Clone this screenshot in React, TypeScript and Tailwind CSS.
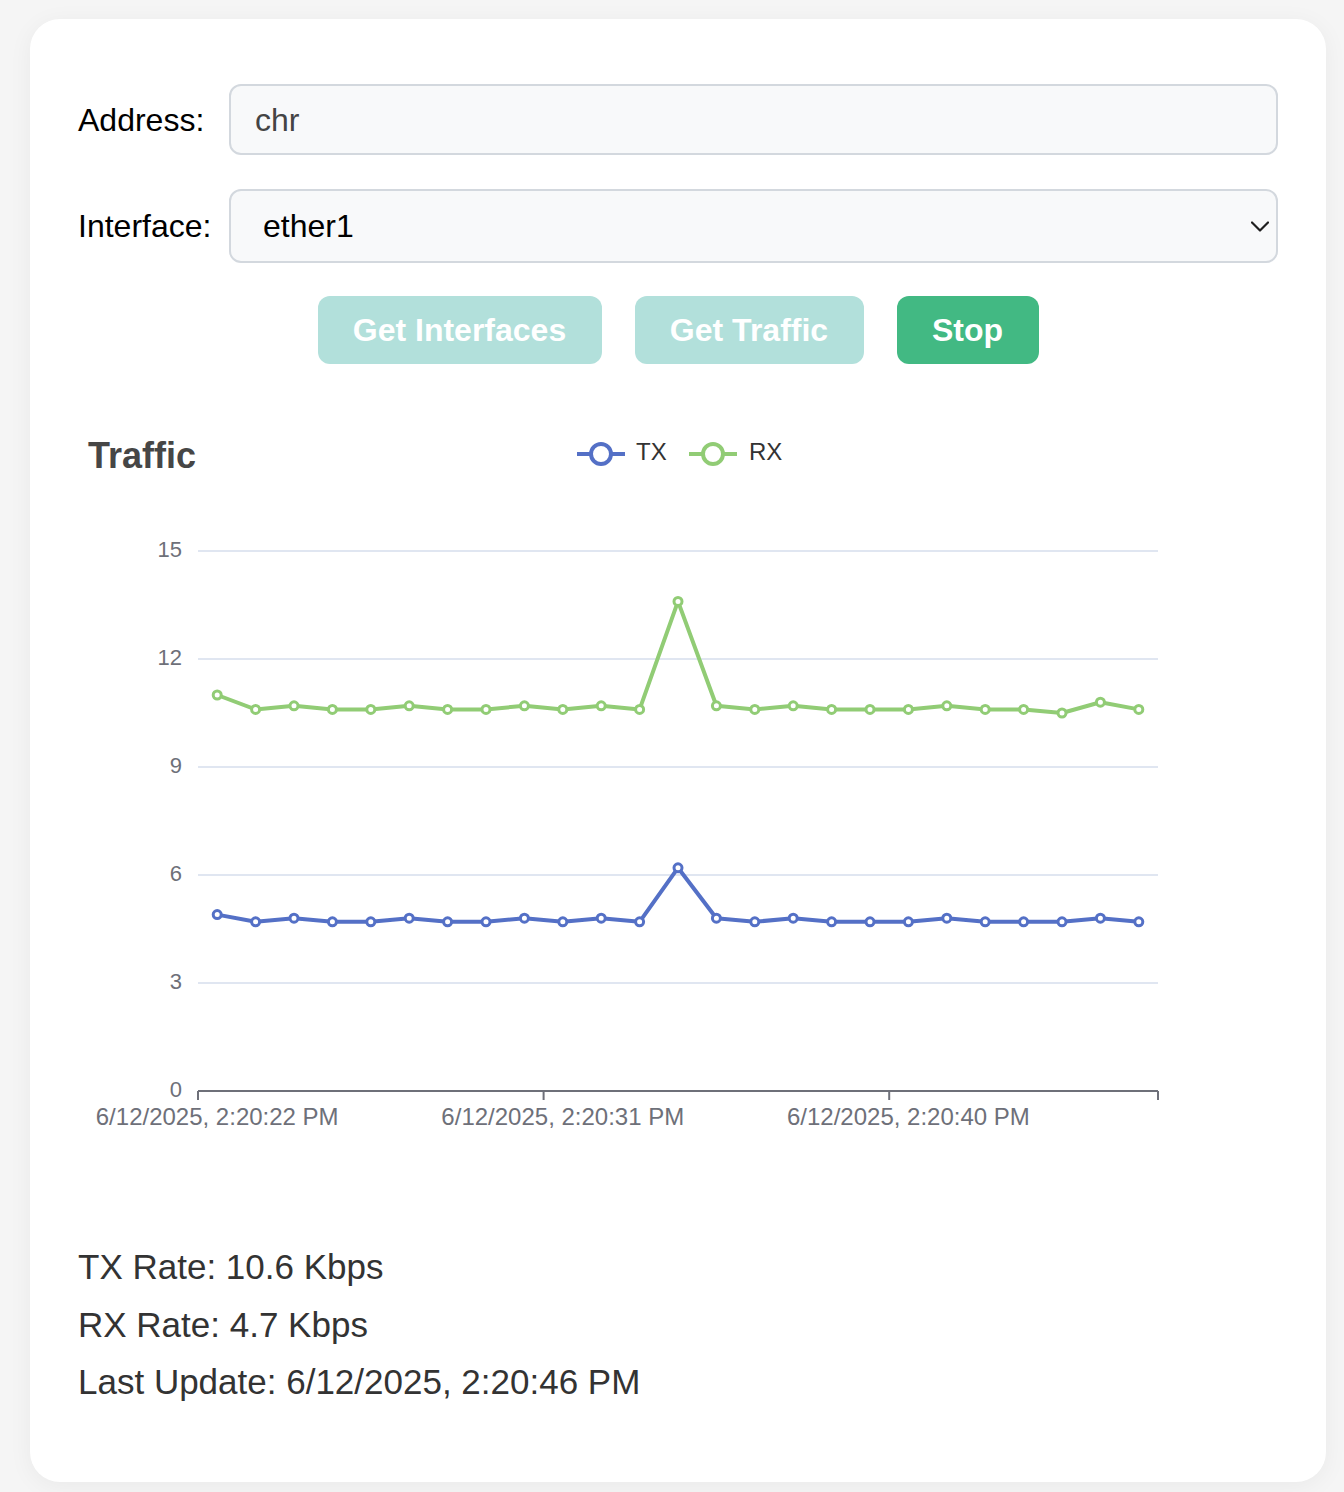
const tx = [4.9, 4.7, 4.8, 4.7, 4.7, 4.8, 4.7, 4.7, 4.8, 4.7, 4.8, 4.7, 6.2, 4.8, 4.7, 4.8, 4.7, 4.7, 4.7, 4.8, 4.7, 4.7, 4.7, 4.8, 4.7];
const rx = [11.0, 10.6, 10.7, 10.6, 10.6, 10.7, 10.6, 10.6, 10.7, 10.6, 10.7, 10.6, 13.6, 10.7, 10.6, 10.7, 10.6, 10.6, 10.6, 10.7, 10.6, 10.6, 10.5, 10.8, 10.6];

const px = (i: number) => 139.2 + 38.4 * i;
const py = (v: number) => 692 - 36 * v;

const Series = ({ data, color }: { data: number[]; color: string }) => {
  const pts = data.map((v, i) => `${px(i)},${py(v)}`).join(" ");
  return (
    <g>
      <polyline points={pts} fill="none" stroke={color} strokeWidth={4} strokeLinejoin="round" />
      {data.map((v, i) => (
        <circle key={i} cx={px(i)} cy={py(v)} r={4} fill="#fff" stroke={color} strokeWidth={3} />
      ))}
    </g>
  );
};

const Chart = () => {
  const grid = [3, 6, 9, 12, 15];
  return (
    <svg width={1199} height={839} className="block" style={{ fontFamily: "'Liberation Sans', Arial, sans-serif" }}>
      <text x={10} y={59} dominantBaseline="middle" fontSize={36} fontWeight={700} fill="#464646">
        Traffic
      </text>

      {/* legend */}
      <line x1={499} y1={55} x2={547} y2={55} stroke="#5470c6" strokeWidth={4} />
      <circle cx={523} cy={55} r={10} fill="#fff" stroke="#5470c6" strokeWidth={4} />
      <text x={558} y={55} dominantBaseline="middle" fontSize={24} fill="#333">TX</text>
      <line x1={611} y1={55} x2={659} y2={55} stroke="#91cc75" strokeWidth={4} />
      <circle cx={635} cy={55} r={10} fill="#fff" stroke="#91cc75" strokeWidth={4} />
      <text x={671} y={55} dominantBaseline="middle" fontSize={24} fill="#333">RX</text>

      {grid.map((v) => (
        <line key={v} x1={120} x2={1080} y1={py(v)} y2={py(v)} stroke="#e0e6f1" strokeWidth={2} />
      ))}
      {[0, ...grid].map((v) => (
        <text key={v} x={104} y={py(v)} textAnchor="end" dominantBaseline="middle" fontSize={22} fill="#6e7079">
          {v}
        </text>
      ))}

      <line x1={120} x2={1080} y1={692} y2={692} stroke="#6e7079" strokeWidth={2} />
      {[120, 465.6, 811.2, 1080].map((x) => (
        <line key={x} x1={x} x2={x} y1={692} y2={701} stroke="#6e7079" strokeWidth={2} />
      ))}
      {[
        [0, "6/12/2025, 2:20:22 PM"],
        [9, "6/12/2025, 2:20:31 PM"],
        [18, "6/12/2025, 2:20:40 PM"],
      ].map(([i, label]) => (
        <text key={i} x={px(i as number)} y={720} textAnchor="middle" dominantBaseline="middle" fontSize={24} fill="#6e7079">
          {label}
        </text>
      ))}

      <Series data={rx} color="#91cc75" />
      <Series data={tx} color="#5470c6" />
    </svg>
  );
};

export default function App() {
  return (
    <div className="min-h-[1492px] bg-[#f5f5f5] pt-[19px] pb-[10px] font-['Liberation_Sans',Arial,sans-serif]">
      <div className="ml-[30px] w-[1296px] rounded-[30px] bg-white px-[48px] pt-[65px] pb-[71px] shadow-[0_4px_24px_rgba(0,0,0,0.05)]">
        <div className="flex items-center">
          <label className="w-[151px] shrink-0 text-[32px] text-black">Address:</label>
          <div className="flex h-[71px] flex-1 items-center rounded-[12px] border-2 border-[#d3d8de] bg-[#f8f9fa] px-[24px] text-[32px] text-[#444]">
            chr
          </div>
        </div>

        <div className="mt-[34px] flex items-center">
          <label className="w-[151px] shrink-0 text-[32px] text-black">Interface:</label>
          <div className="flex h-[74px] flex-1 items-center justify-between rounded-[12px] border-2 border-[#d3d8de] bg-[#f8f9fa] pl-[32px] pr-[7px] text-[32px] text-black">
            <span>ether1</span>
            <svg width={18} height={11} viewBox="0 0 18 11" className="text-[#1f1f1f]">
              <path d="M1 1.5 L9 9.5 L17 1.5" fill="none" stroke="currentColor" strokeWidth={2.2} strokeLinecap="round" strokeLinejoin="round" />
            </svg>
          </div>
        </div>

        <div className="mt-[33px] flex justify-center gap-[33px]">
          <button className="h-[68px] w-[284px] rounded-[12px] bg-[#b2e0db] text-[32px] font-bold text-white">
            Get Interfaces
          </button>
          <button className="h-[68px] w-[229px] rounded-[12px] bg-[#b2e0db] text-[32px] font-bold text-white">
            Get Traffic
          </button>
          <button className="h-[68px] w-[142px] rounded-[12px] bg-[#42b983] text-[32px] font-bold text-white">
            Stop
          </button>
        </div>

        <div className="mt-[35px]">
          <Chart />
        </div>

        <div className="text-[35px] leading-[57.5px] text-[#333]">
          <p>TX Rate: 10.6 Kbps</p>
          <p>RX Rate: 4.7 Kbps</p>
          <p>Last Update: 6/12/2025, 2:20:46 PM</p>
        </div>
      </div>
    </div>
  );
}
